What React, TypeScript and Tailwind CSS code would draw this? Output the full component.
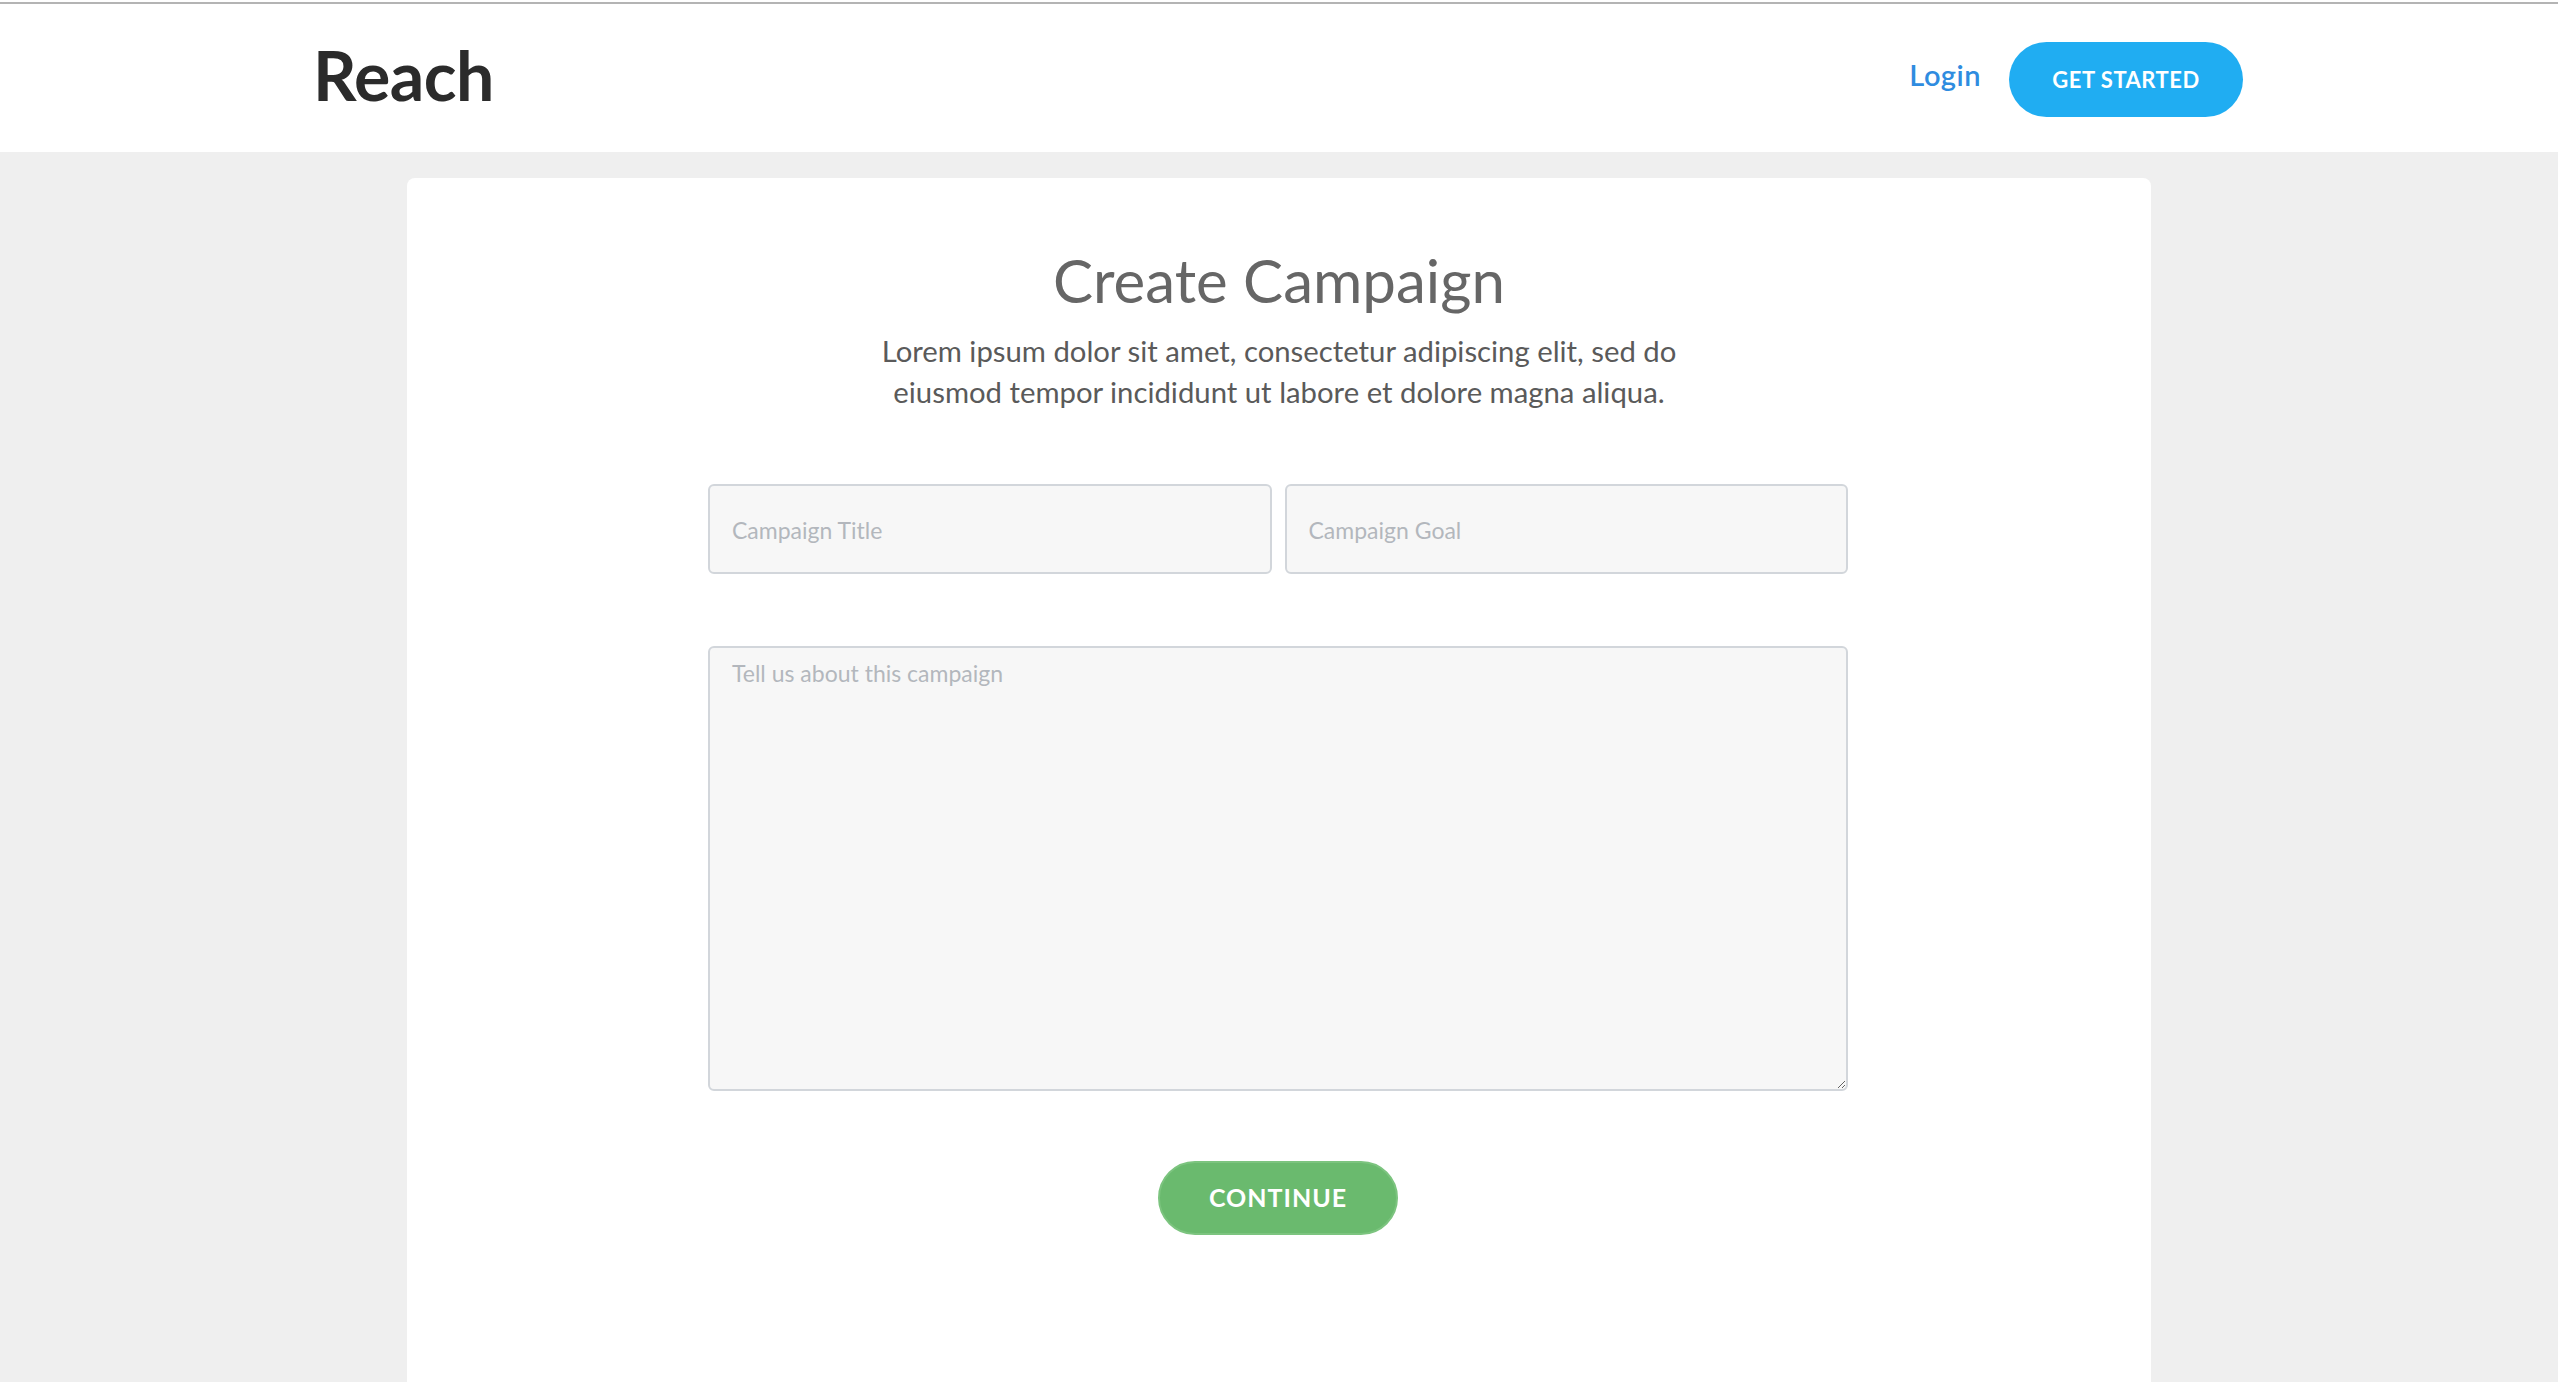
import React from 'react';

const font = { fontFamily: 'Lato, "Noto Sans", sans-serif' };

function Header() {
  return (
    <header className="bg-white border-t-2 border-[#b4b4b4] mt-[2px]">
      <div className="w-[1928px] mx-auto h-[148px] flex items-center justify-between">
        <a href="#" className="text-[68px] font-bold text-[#2b2b2b] leading-none tracking-[-0.5px] -mt-[7px] -ml-[2px]">
          Reach
        </a>
        <div className="flex items-center gap-[28px] -mt-[4px]">
          <a href="#" className="text-[29px] font-semibold text-[#2f8ce0] tracking-[0.5px] -mt-[2px]">
            Login
          </a>
          <button className="h-[75px] w-[234px] rounded-full bg-[#20adf2] text-white text-[22px] font-bold tracking-[0.5px] mt-[6px]">
            GET STARTED
          </button>
        </div>
      </div>
    </header>
  );
}

export default function App() {
  return (
    <div className="min-h-screen bg-[#efefef]" style={font}>
      <Header />
      <main className="w-[1744px] mx-auto mt-[26px] bg-white rounded-t-[8px] min-h-[1210px] pt-[66px]">
        <h1 className="text-center text-[60px] leading-[72px] text-[#666666] font-normal">
          Create Campaign
        </h1>
        <p className="mt-[14px] text-center text-[29.3px] leading-[41px] text-[#5a5a5a]">
          Lorem ipsum dolor sit amet, consectetur adipiscing elit, sed do
          <br />
          eiusmod tempor incididunt ut labore et dolore magna aliqua.
        </p>

        <form className="w-[1140px] mx-auto mt-[72px] flex flex-col -translate-x-[1px]">
          <div className="flex gap-[13px]">
            <input
              type="text"
              placeholder="Campaign Title"
              className="flex-1 h-[90px] rounded-[6px] border-2 border-[#d2d6db] bg-[#f7f7f7] px-[22px] pt-[1px] text-[23px] text-[#444] placeholder:text-[#b3b7bd] outline-none"
            />
            <input
              type="text"
              placeholder="Campaign Goal"
              className="flex-1 h-[90px] rounded-[6px] border-2 border-[#d2d6db] bg-[#f7f7f7] px-[22px] pt-[1px] text-[23px] text-[#444] placeholder:text-[#b3b7bd] outline-none"
            />
          </div>
          <textarea
            placeholder="Tell us about this campaign"
            className="mt-[72px] h-[445px] rounded-[6px] border-2 border-[#d2d6db] bg-[#f7f7f7] px-[22px] pt-[8px] text-[23px] text-[#444] placeholder:text-[#b3b7bd] outline-none"
          />
          <div className="flex justify-center mt-[70px]">
            <button
              type="button"
              className="h-[74px] w-[240px] rounded-full bg-[#6aba6e] border-2 border-[#7cc47f] text-white text-[25px] font-bold tracking-[1px]"
            >
              CONTINUE
            </button>
          </div>
        </form>
      </main>
    </div>
  );
}
